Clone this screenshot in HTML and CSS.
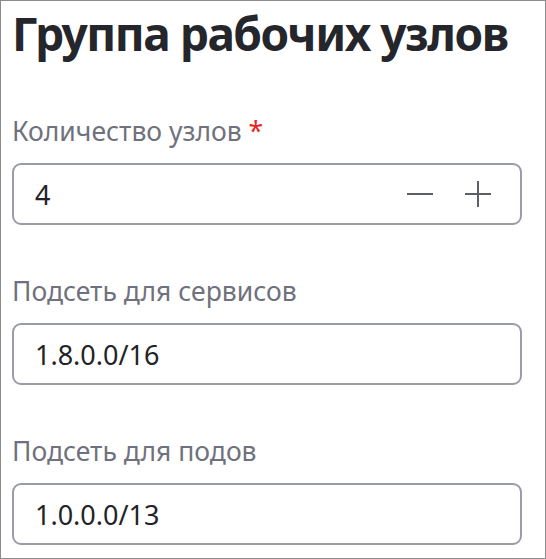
FILE: index.html
```html
<!DOCTYPE html>
<html lang="ru">
<head>
<meta charset="utf-8">
<link rel="stylesheet" href="styles.css">
</head>
<body>
<div class="frame">
  <h1 class="title">Группа рабочих узлов</h1>
  <div class="field">
    <div class="label">Количество узлов <span class="req">*</span></div>
    <div class="input">
      <span class="value">4</span>
      <div class="controls">
        <svg class="icon" width="28" height="28" viewBox="0 0 28 28"><path d="M1 14H27" stroke="#5b5e67" stroke-width="2"/></svg>
        <svg class="icon" width="28" height="28" viewBox="0 0 28 28"><path d="M1 14H27M14 1V27" stroke="#5b5e67" stroke-width="2"/></svg>
      </div>
    </div>
  </div>
  <div class="field">
    <div class="label">Подсеть для сервисов</div>
    <div class="input"><span class="value">1.8.0.0/16</span></div>
  </div>
  <div class="field">
    <div class="label">Подсеть для подов</div>
    <div class="input"><span class="value">1.0.0.0/13</span></div>
  </div>
</div>
</body>
</html>
```
FILE: styles.css
```css
html, body { margin: 0; padding: 0; background: #fff; }
.frame {
  box-sizing: border-box;
  width: 546px;
  height: 559px;
  border: 1px solid #8c8c8c;
  padding: 0 23px 0 11px;
  font-family: "Noto Sans", sans-serif;
  overflow: hidden;
}
.title {
  margin: 0;
  font-size: 46px;
  line-height: 64px;
  font-weight: 700;
  letter-spacing: -1.45px;
  white-space: nowrap;
  color: #24262c;
}
.field { margin-top: 49px; }
.label {
  font-size: 26.5px;
  line-height: 34px;
  color: #6f727c;
  margin-bottom: 15px;
}
.req { color: #e8251c; }
.input {
  box-sizing: border-box;
  height: 62px;
  border: 2px solid #9a9da7;
  border-radius: 9px;
  display: flex;
  align-items: center;
  padding: 0 28px 0 21px;
}
.value {
  flex: 1;
  font-size: 27px;
  color: #222328;
}
.controls { display: flex; gap: 30px; }
.icon { display: block; }
```
